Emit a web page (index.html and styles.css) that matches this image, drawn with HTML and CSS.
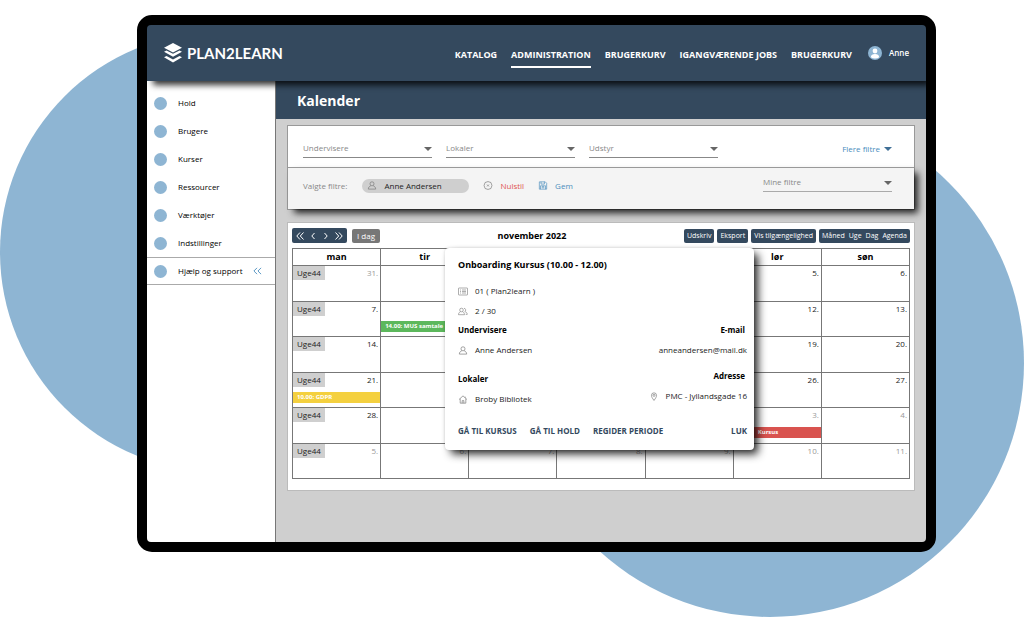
FILE: index.html
```html
<!DOCTYPE html>
<html lang="da">
<head>
<meta charset="utf-8">
<title>Plan2learn – Kalender</title>
<link rel="stylesheet" href="styles.css">
</head>
<body>
<svg class="symbols" aria-hidden="true">
  <symbol id="user" viewBox="0 0 16 16"><circle cx="8" cy="5" r="3.6"/><path d="M5.800 8.600C3 9.600 1.500 11.400 1.500 14.400h13c0-3-1.500-4.800-4.300-5.800"/></symbol>
  <symbol id="users" viewBox="0 0 20 16"><circle cx="7" cy="5" r="3.600"/><path d="M4.800 8.600C2.400 9.600 1 11.400 1 14.400h12c0-3-1.400-4.800-3.800-5.800M12 1.600a3.500 3.500 0 0 1 1.500 6.600c3 .8 5 2.600 5 5.600h-3"/></symbol>
  <symbol id="list" viewBox="0 0 20 16"><rect x="1" y="1" width="18" height="14" rx="1"/><path d="M4 5h2M8 5h8M4 8h2M8 8h8M4 11h2M8 11h8"/></symbol>
  <symbol id="home" viewBox="0 0 16 16"><path d="M1 8l7-6.500L15 8M3 6.500v8h10v-8M6.500 14.500v-4.500h3v4.500M12 3v2"/></symbol>
  <symbol id="pin" viewBox="0 0 16 16"><path d="M8 15C5 11 3.500 8.600 3.500 6a4.500 4.500 0 0 1 9 0c0 2.600-1.500 5-4.500 9z"/><circle cx="8" cy="6" r="1.800"/></symbol>
  <symbol id="reset" viewBox="0 0 16 16"><circle class="ring" cx="8" cy="8" r="7"/><path class="cross" d="M6.300 6.300l3.400 3.400M9.700 6.300L6.300 9.700"/></symbol>
  <symbol id="save" viewBox="0 0 16 16"><path d="M1.500 1.500h10.500l2.500 2.500v10.500h-13zM4.500 1.500v4h6v-4M3.500 14.500v-6h9v6"/><circle cx="8" cy="11" r="1.600"/></symbol>
</svg>
<div class="stage">
  <div class="blob blob-left"></div>
  <div class="blob blob-right"></div>
  <div class="device">
    <header class="topbar">
      <a class="brand" href="#">
        <svg class="brand-mark" viewBox="0 0 18 21"><path d="M9 0l9 4.800-9 4.700L0 4.800z"/><path d="M0 8.700l2.500-1.300L9 10.800l6.500-3.400L18 8.700l-9 5z"/><path d="M0 14.300l2.500-1.400L9 16.400l6.500-3.500 2.500 1.400-9 5.200z"/></svg>
        <span>PLAN2LEARN</span>
      </a>
      <nav class="mainnav">
        <a href="#">KATALOG</a>
        <a class="active" href="#">ADMINISTRATION</a>
        <a href="#">BRUGERKURV</a>
        <a href="#">IGANGVÆRENDE JOBS</a>
        <a href="#">BRUGERKURV</a>
      </nav>
      <a class="account" href="#">
        <svg class="avatar" viewBox="0 0 14 14"><circle class="disc" cx="7" cy="7" r="7"/><circle cx="7" cy="5" r="2.400"/><path d="M2.800 11.300C3 8.800 4.600 8 7 8s4 .8 4.200 3.300A6.500 6.500 0 0 1 7 12.600a6.500 6.500 0 0 1-4.200-1.300z"/></svg>
        <span>Anne</span>
      </a>
    </header>
    <div class="workspace">
      <aside class="sidebar">
        <a href="#">Hold</a>
        <a href="#">Brugere</a>
        <a href="#">Kurser</a>
        <a href="#">Ressourcer</a>
        <a href="#">Værktøjer</a>
        <a href="#">Indstillinger</a>
        <a class="help" href="#">Hjælp og support
          <svg class="collapse" viewBox="0 0 10 8"><path d="M4.500.5L1 4l3.500 3.500M9 .5L5.500 4 9 7.500"/></svg>
        </a>
      </aside>
      <main class="main">
        <h1 class="page-title">Kalender</h1>
        <section class="filters">
          <div class="filter-row">
            <span class="picker"><select aria-label="Undervisere"><option>Undervisere</option></select></span>
            <span class="picker"><select aria-label="Lokaler"><option>Lokaler</option></select></span>
            <span class="picker"><select aria-label="Udstyr"><option>Udstyr</option></select></span>
            <button class="more" type="button">Flere filtre</button>
          </div>
          <div class="chosen-row">
            <span class="caption">Valgte filtre:</span>
            <button class="chip" type="button"><svg class="icon"><use href="#user"/></svg>Anne Andersen</button>
            <button class="action reset" type="button"><svg class="icon"><use href="#reset"/></svg>Nulstil</button>
            <button class="action save" type="button"><svg class="icon"><use href="#save"/></svg>Gem</button>
            <span class="picker mine"><select aria-label="Mine filtre"><option>Mine filtre</option></select></span>
          </div>
        </section>
        <section class="calendar">
          <div class="toolbar">
            <div class="group">
              <div class="bar pager">
                <button type="button" aria-label="Forrige år"><svg viewBox="0 0 8 8"><path d="M4 .5L.8 4 4 7.500M7.500.5L4.300 4l3.200 3.500"/></svg></button>
                <button type="button" aria-label="Forrige måned"><svg viewBox="0 0 8 8"><path d="M5.500 1L2.800 4l2.700 3"/></svg></button>
                <button type="button" aria-label="Næste måned"><svg viewBox="0 0 8 8"><path d="M2.500 1L5.200 4 2.500 7"/></svg></button>
                <button type="button" aria-label="Næste år"><svg viewBox="0 0 8 8"><path d="M.5.5L3.700 4 .5 7.500M4 .5L7.200 4 4 7.500"/></svg></button>
              </div>
              <button class="today" type="button">I dag</button>
            </div>
            <h2 class="month">november 2022</h2>
            <div class="group tools">
              <div class="bar"><button type="button">Udskriv</button></div>
              <div class="bar"><button type="button">Eksport</button></div>
              <div class="bar"><button type="button">Vis tilgængelighed</button></div>
              <div class="bar views"><button type="button">Måned</button><button type="button">Uge</button><button type="button">Dag</button><button type="button">Agenda</button></div>
            </div>
          </div>
          <div class="board">
            <table class="month-grid">
              <thead>
                <tr><th>man</th><th>tir</th><th></th><th></th><th></th><th>lør</th><th>søn</th></tr>
              </thead>
              <tbody>
                <tr><td class="out"><div class="day"><span class="week">Uge44</span>31.</div></td><td></td><td></td><td></td><td></td><td><div class="day">5.</div></td><td><div class="day">6.</div></td></tr>
                <tr><td><div class="day"><span class="week">Uge44</span>7.</div></td><td><div class="day"></div><a class="event green" href="#">14.00: MUS samtale</a></td><td></td><td></td><td></td><td><div class="day">12.</div></td><td><div class="day">13.</div></td></tr>
                <tr><td><div class="day"><span class="week">Uge44</span>14.</div></td><td></td><td></td><td></td><td></td><td><div class="day">19.</div></td><td><div class="day">20.</div></td></tr>
                <tr><td><div class="day"><span class="week">Uge44</span>21.</div><a class="event yellow" href="#">10.00: GDPR</a></td><td></td><td></td><td></td><td></td><td><div class="day">26.</div></td><td><div class="day">27.</div></td></tr>
                <tr><td><div class="day"><span class="week">Uge44</span>28.</div></td><td></td><td></td><td></td><td></td><td class="out"><div class="day">3.</div><a class="event red" href="#">Kursus</a></td><td class="out"><div class="day">4.</div></td></tr>
                <tr><td class="out"><div class="day"><span class="week">Uge44</span>5.</div></td><td class="out"><div class="day">6.</div></td><td class="out"><div class="day">7.</div></td><td class="out"><div class="day">8.</div></td><td class="out"><div class="day">9.</div></td><td class="out"><div class="day">10.</div></td><td class="out"><div class="day">11.</div></td></tr>
              </tbody>
            </table>
            <article class="popup">
              <h3>Onboarding Kursus (10.00 - 12.00)</h3>
              <p class="line"><svg class="icon"><use href="#list"/></svg>01 ( Plan2learn )</p>
              <p class="line attendance"><svg class="icon"><use href="#users"/></svg>2 / 30</p>
              <div class="details">
                <div class="people">
                  <h4>Undervisere</h4>
                  <p class="line"><svg class="icon"><use href="#user"/></svg>Anne Andersen</p>
                  <h4>Lokaler</h4>
                  <p class="line"><svg class="icon"><use href="#home"/></svg>Broby Bibliotek</p>
                </div>
                <div class="contact">
                  <h4>E-mail</h4>
                  <p class="line">anneandersen@mail.dk</p>
                  <h4>Adresse</h4>
                  <p class="line"><svg class="icon"><use href="#pin"/></svg>PMC - Jyllandsgade 16</p>
                </div>
              </div>
              <div class="popup-actions">
                <button type="button">GÅ TIL KURSUS</button>
                <button type="button">GÅ TIL HOLD</button>
                <button type="button">REGIDER PERIODE</button>
                <button class="close" type="button">LUK</button>
              </div>
            </article>
          </div>
        </section>
      </main>
    </div>
  </div>
</div>
</body>
</html>
```
FILE: styles.css
```css
:root {
  --navy: #34495e;
  --sky: #8eb5d3;
  --grey: #cfcfcf;
}

* { box-sizing: border-box; }

body {
  margin: 0;
  background: #fff;
  color: #222;
  font: 8px/14px "Open Sans", "Noto Sans", sans-serif;
}

h1, h2, h3, h4, p { margin: 0; }
a { color: inherit; text-decoration: none; }

button, select {
  margin: 0;
  padding: 0;
  border: 0;
  background: none;
  color: inherit;
  font: inherit;
}

.symbols { position: absolute; width: 0; height: 0; }

.icon {
  flex: none;
  width: 10px;
  height: 9px;
  fill: none;
  stroke: #777;
  stroke-width: 1.2;
}

/* Backdrop and device */
.stage {
  position: relative;
  display: flex;
  min-height: 100vh;
  padding: 15px 88px 65px 137px;
  overflow: hidden;
}

.blob { position: absolute; border-radius: 50%; background: var(--sky); }
.blob-left { left: 0; top: 32px; width: 440px; height: 440px; }
.blob-right { right: 0; bottom: 0; width: 508px; height: 508px; }

.device {
  position: relative;
  display: flex;
  flex: 1;
  flex-direction: column;
  border: 10px solid #000;
  border-radius: 15px;
  background: #000;
}

/* Top bar */
.topbar {
  position: relative;
  z-index: 1;
  display: flex;
  align-items: center;
  height: 56px;
  padding: 0 17px;
  border-radius: 4px 4px 0 0;
  background: var(--navy);
  box-shadow: 5px 5px 6px -1px rgba(0, 0, 0, .8);
  clip-path: inset(0 0 -16px 0);
  color: #fff;
}

.brand {
  display: flex;
  align-items: center;
  gap: 5px;
  font: 700 15px/20px Lato, sans-serif;
}

.brand-mark { width: 18px; height: 21px; fill: #fff; }

.mainnav {
  display: flex;
  gap: 14px;
  margin-left: auto;
  padding-top: 9px;
  font-size: 9px;
  font-weight: 700;
}

.mainnav a { padding-bottom: 4px; border-bottom: 2px solid transparent; }
.mainnav .active { border-color: #fff; }

.account {
  display: flex;
  align-items: center;
  gap: 7px;
  margin-left: 16px;
  font-weight: 600;
}

.avatar { width: 14px; height: 14px; fill: #fff; }
.avatar .disc { fill: var(--sky); }

.workspace { display: flex; flex: 1; }

/* Sidebar */
.sidebar {
  width: 129px;
  padding-top: 8px;
  border-right: 1px solid #777;
  border-radius: 0 0 0 4px;
  background: #fff;
  color: #000;
}

.sidebar a {
  display: flex;
  align-items: center;
  gap: 11px;
  height: 28px;
  padding-left: 7px;
}

.sidebar a::before {
  content: "";
  width: 13px;
  height: 13px;
  border-radius: 50%;
  background: var(--sky);
}

.sidebar .help { border: solid #aaa; border-width: 1px 0; }
.collapse { width: 9px; height: 8px; fill: none; stroke: #4a8dbd; }

/* Main column */
.main {
  flex: 1;
  min-width: 0;
  padding-bottom: 50px;
  border-radius: 0 0 4px 0;
  background: var(--grey);
}

.page-title {
  padding: 10px 21px 8px;
  background: var(--navy);
  color: #fff;
  font-size: 14px;
  line-height: 20px;
}

.filters {
  margin: 6px 11px 12px;
  border: 1px solid #999;
  background: #fff;
  color: #888;
}

.filter-row {
  display: flex;
  align-items: center;
  gap: 14px;
  padding: 13px 22px 9px 15px;
}

.picker {
  position: relative;
  width: 129px;
  border-bottom: 1px solid #888;
}

.picker select {
  display: block;
  width: 100%;
  height: 18px;
  appearance: none;
}

.picker::after,
.more::after {
  content: "";
  border: solid transparent;
  border-width: 4px 4px 0;
  border-top-color: #666;
}

.picker::after {
  position: absolute;
  right: 0;
  top: 8px;
  pointer-events: none;
}

.more {
  display: flex;
  align-items: center;
  gap: 4px;
  margin-left: auto;
  color: #4a8dbd;
}

.more::after { border-top-color: #3f6f96; }

.chosen-row {
  display: flex;
  align-items: center;
  height: 42px;
  padding: 0 22px 6px 15px;
  border-top: 1px solid #999;
  background: #f4f4f4;
  box-shadow: 5px 5px 7px -1px rgba(0, 0, 0, .85);
}

.chip {
  display: flex;
  align-items: center;
  gap: 7px;
  width: 107px;
  margin-left: 15px;
  padding-left: 5px;
  border-radius: 7px;
  background: var(--grey);
  color: #222;
}

.action { display: flex; align-items: center; gap: 7px; margin-left: 14px; }
.reset { color: #e0564f; }
.reset .ring { stroke: #999; }
.reset .cross { stroke: #e0564f; stroke-width: 2; }
.save { color: #4a8dbd; }
.save .icon { stroke: #4a8dbd; }
.mine { align-self: flex-start; margin: 5px 0 0 auto; border-color: #aaa; }

/* Calendar */
.calendar {
  margin: 0 11px;
  padding: 5px 4px 11px;
  border: 1px solid #bbb;
  background: #fff;
}

.toolbar {
  display: flex;
  align-items: center;
  justify-content: space-between;
  margin-bottom: 5px;
}

.group { display: flex; align-items: center; gap: 5px; }
.tools { gap: 3px; font-size: 7px; }

.bar {
  display: flex;
  padding: 0 3px;
  border-radius: 2px;
  background: var(--navy);
  color: #fff;
}

.views { gap: 4px; }
.pager { align-items: center; gap: 5px; height: 15px; padding: 0 4px; }
.pager button { display: flex; }
.pager svg { width: 8px; height: 8px; fill: none; stroke: #fff; }

.today {
  padding: 0 5px;
  border-radius: 2px;
  background: #777;
  color: #fff;
}

.month { color: #000; font-size: 9px; line-height: 15px; }

.board { position: relative; }

.month-grid {
  width: 100%;
  height: 231px;
  border-collapse: collapse;
  table-layout: fixed;
}

.month-grid th {
  height: 17px;
  padding: 0;
  border: 1px solid #777;
  color: #000;
  font-size: 9px;
}

.month-grid td {
  height: 35px;
  padding: 0;
  border: 1px solid #777;
  vertical-align: top;
}

.month-grid th + th,
.month-grid td + td { border-left-color: #333; }

.day {
  display: flex;
  justify-content: flex-end;
  min-height: 14px;
  padding-right: 2px;
}

.week { margin-right: auto; padding: 0 4px; background: var(--grey); }
.out .day { color: #999; }
.out .week { color: #222; }

.event {
  display: block;
  height: 11px;
  margin-top: 5px;
  padding-left: 4px;
  overflow: hidden;
  color: #fff;
  font-size: 6px;
  font-weight: 700;
  line-height: 11px;
  white-space: nowrap;
}

.green { width: 64px; background: #5cb85c; }
.yellow { background: #f4d03f; }
.red { padding-left: 24px; background: #d9534f; }

/* Event popup */
.popup {
  position: absolute;
  left: 153px;
  top: 0;
  width: 50%;
  padding: 10px 7px 12px 13px;
  border-radius: 4px;
  background: #fff;
  box-shadow: 5px 5px 8px -1px rgba(0, 0, 0, .85), 0 0 3px rgba(0, 0, 0, .15);
}

.popup h3 {
  margin-bottom: 12px;
  color: #000;
  font-size: 9px;
}

.popup h4 { margin-bottom: 6px; color: #000; font-size: 8px; }
.line { display: flex; align-items: center; gap: 7px; }
.attendance { margin: 6px 0 5px; }
.details { display: flex; justify-content: space-between; }
.people .line + h4 { margin-top: 15px; }
.contact { text-align: right; }
.contact h4 { padding-right: 2px; }
.contact .line { justify-content: flex-end; }
.contact .line + h4 { margin-top: 12px; }

.popup-actions {
  display: flex;
  gap: 13px;
  margin-top: 18px;
  color: var(--navy);
  font-size: 8px;
  font-weight: 700;
}

.close { margin-left: auto; }
```
